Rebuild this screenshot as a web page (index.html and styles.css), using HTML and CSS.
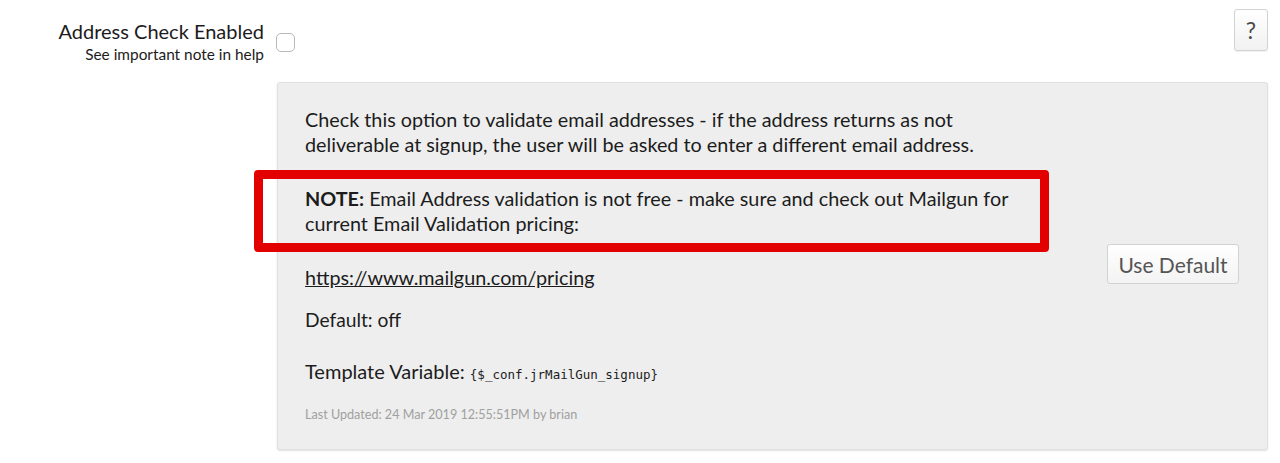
FILE: index.html
```html
<!DOCTYPE html>
<html>
<head>
<meta charset="utf-8">
<link rel="stylesheet" href="styles.css">
</head>
<body>
<div class="page">
  <div class="field-row">
    <div class="label-col">
      <div class="label">Address Check Enabled</div>
      <div class="sublabel">See important note in help</div>
    </div>
    <div class="input-col">
      <span class="checkbox"></span>
    </div>
    <div class="help-col">
      <button class="help-btn">?</button>
    </div>
  </div>
  <div class="help-panel">
    <div class="help-text">
      <p class="para first">Check this option to validate email addresses - if the address returns as not<br>deliverable at signup, the user will be asked to enter a different email address.</p>
      <div class="note-wrap">
        <p class="para note"><b>NOTE:</b> Email Address validation is not free - make sure and check out Mailgun for<br>current Email Validation pricing:</p>
        <span class="red-frame"></span>
      </div>
      <p class="para link-p"><a href="#" class="link">https://www.mailgun.com/pricing</a></p>
      <p class="para default-p">Default: off</p>
      <p class="para tpl">Template Variable: <code class="mono">{$_conf.jrMailGun_signup}</code></p>
      <p class="updated">Last Updated: 24 Mar 2019 12:55:51PM by brian</p>
    </div>
    <div class="btn-col">
      <button class="default-btn">Use Default</button>
    </div>
  </div>
</div>
</body>
</html>
```

FILE: styles.css
```css
html, body {
  margin: 0;
  padding: 0;
  background: #ffffff;
}
body {
  font-family: Lato, "Noto Sans", sans-serif;
  color: #1c1c1c;
  width: 1280px;
  height: 463px;
  overflow: hidden;
}
.page {
  padding-top: 9px;
}
.field-row {
  display: flex;
  align-items: flex-start;
}
.label-col {
  width: 264px;
  text-align: right;
  padding-top: 11px;
}
.label {
  font-size: 20px;
  line-height: 22px;
  color: #1c1c1c;
}
.sublabel {
  margin-top: 2px;
  font-size: 15.4px;
  line-height: 20px;
  color: #1c1c1c;
}
.input-col {
  padding-left: 12px;
  padding-top: 24px;
}
.checkbox {
  display: block;
  width: 17px;
  height: 17px;
  border: 1px solid #b9b9b9;
  border-radius: 5px;
  background: #fff;
}
.help-col {
  margin-left: auto;
  margin-right: 12px;
}
.help-btn {
  width: 34px;
  height: 42px;
  border: 1px solid #d2d2d2;
  border-radius: 3px;
  background: linear-gradient(#ffffff, #f1f1f1);
  font-family: Lato, sans-serif;
  font-size: 23px;
  color: #4a4a4a;
  padding: 0;
  box-shadow: 0 1px 1px rgba(0,0,0,0.06);
}
.help-panel {
  margin-left: 277px;
  margin-top: 18px;
  width: 989px;
  height: 366px;
  background: #eeeeee;
  border: 1px solid #e0e0e0;
  border-radius: 3px;
  box-shadow: 0 1px 2px rgba(0,0,0,0.12);
  display: flex;
}
.help-text {
  flex: 1;
  padding-left: 27px;
  padding-top: 24px;
}
.para {
  margin: 0;
  font-size: 19.8px;
  line-height: 25px;
}
.note-wrap {
  position: relative;
  margin-top: 29px;
}
.red-frame {
  position: absolute;
  left: -51px;
  top: -16px;
  width: 777px;
  height: 64px;
  border: 9px solid #e30000;
  border-radius: 4px;
  pointer-events: none;
}
.link-p {
  margin-top: 29px;
}
.link {
  color: #1c1c1c;
  text-decoration: underline;
}
.default-p {
  margin-top: 17px;
  font-size: 19.2px;
}
.tpl {
  margin-top: 27px;
  font-size: 20px;
}
.mono {
  font-family: "DejaVu Sans Mono", monospace;
  font-size: 12.5px;
}
.updated {
  margin: 20px 0 0 0;
  font-size: 12.6px;
  line-height: 15px;
  color: #a0a0a0;
}
.btn-col {
  display: flex;
  align-items: center;
  padding-right: 28px;
}
.default-btn {
  width: 132px;
  height: 40px;
  border: 1px solid #d2d2d2;
  border-radius: 3px;
  background: linear-gradient(#ffffff, #f3f3f3);
  font-family: Lato, sans-serif;
  font-size: 21px;
  color: #555;
  padding: 0;
  margin-top: -4px;
}
```
